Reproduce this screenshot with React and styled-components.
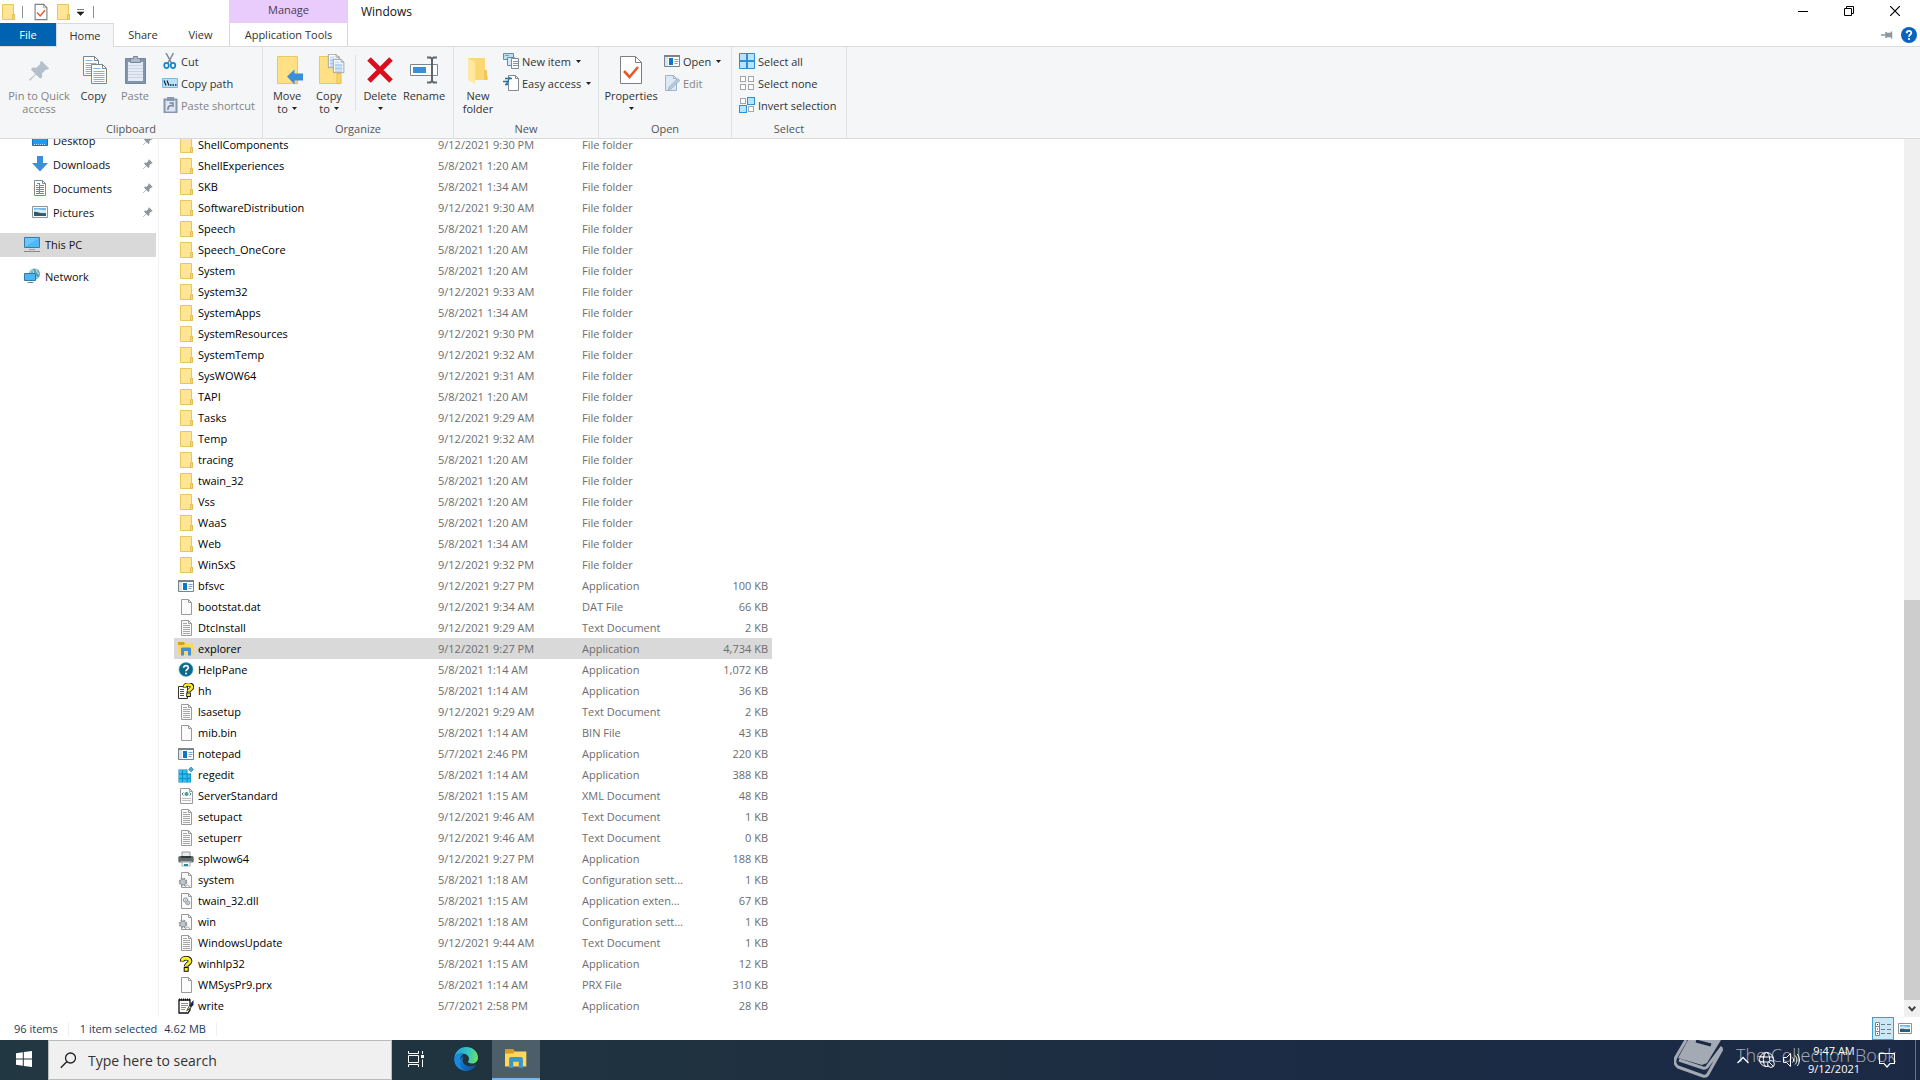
import React, { useState } from 'react';
import styled, { createGlobalStyle } from 'styled-components';

const GlobalStyle = createGlobalStyle`
  * {
    box-sizing: border-box;
  }
  body {
    margin: 0;
    background: #fff;
    color: #111;
    font-family: 'Open Sans', 'Noto Sans', sans-serif;
    font-size: 11px;
  }
  button,
  input {
    font: inherit;
    color: inherit;
  }
  svg {
    display: block;
    flex: none;
  }
`;

const PlainButton = styled.button`
  display: flex;
  align-items: center;
  padding: 0;
  border: 0;
  background: transparent;
  white-space: nowrap;
`;

const Desktop = styled.div`
  display: flex;
  flex-direction: column;
  height: 100vh;
  overflow: hidden;
`;

/* ---------- title bar and tabs ---------- */

const TitleBar = styled.header`
  display: flex;
  height: 23px;
`;

const QuickAccess = styled.div`
  display: flex;
  align-items: center;
  width: 229px;
`;

const QuickButton = styled(PlainButton)`
  justify-content: center;
  width: ${(p) => p.$width || 22}px;
  height: 22px;
`;

const Divider = styled.span`
  width: 1px;
  height: 12px;
  margin: 0 6px;
  background: #8f8f8f;
`;

const ContextTitle = styled.div`
  width: 119px;
  background: #e9ccfc;
  color: #4b3a57;
  line-height: 20px;
  text-align: center;
`;

const WindowTitle = styled.h1`
  flex: 1;
  margin: 0;
  padding-left: 13px;
  font-size: 12px;
  font-weight: 400;
  line-height: 24px;
`;

const WindowButton = styled(PlainButton)`
  justify-content: center;
  width: 46px;
  height: 21px;
`;

const WindowButtons = styled.div`
  display: flex;
  padding-right: 2px;
`;

const TabRow = styled.nav`
  display: flex;
  height: 24px;
  border-bottom: 1px solid #dadbdc;
`;

const Tab = styled(PlainButton)`
  justify-content: center;
  width: ${(p) => p.$width}px;
  height: 23px;
  color: #333;
`;

const FileTab = styled(Tab)`
  background: #0063b1;
  color: #fff;
`;

const ActiveTab = styled(Tab)`
  height: 24px;
  border: 1px solid #dadbdc;
  border-bottom: 0;
  background: #f4f6f8;
`;

const ContextTab = styled(Tab)`
  border: solid #dcd3e3;
  border-width: 0 1px;
`;

const TabTools = styled.div`
  display: flex;
  flex: 1;
  align-items: center;
  justify-content: flex-end;
  gap: 8px;
  padding-right: 3px;
`;

/* ---------- ribbon ---------- */

const Ribbon = styled.section`
  display: flex;
  height: 92px;
  border-bottom: 1px solid #d8dadc;
  background: #f4f6f8;
`;

const Group = styled.div`
  display: flex;
  flex-direction: column;
  width: ${(p) => p.$width}px;
  border-right: 1px solid #e0e2e4;
`;

const GroupBody = styled.div`
  display: flex;
  flex: 1;
  padding-left: 3px;
`;

const GroupLabel = styled.div`
  height: 17px;
  color: #555;
  line-height: 15px;
  text-align: center;
`;

const BigButton = styled(PlainButton)`
  flex-direction: column;
  gap: 3px;
  width: ${(p) => p.$width || 42}px;
  padding-top: 7px;
  color: ${(p) => (p.disabled ? '#838383' : '#333')};
  line-height: 13px;
`;

const BigLabel = styled.span`
  display: flex;
  align-items: center;
  justify-content: center;
  gap: 4px;
  height: 13px;
`;

const BigText = styled.span`
  display: flex;
  flex-direction: column;
`;

const SmallColumn = styled.div`
  display: flex;
  flex-direction: column;
  padding-top: 3px;
`;

const SmallButton = styled(PlainButton)`
  gap: 3px;
  height: 22px;
  padding: 0 3px 0 4px;
  color: ${(p) => (p.disabled ? '#838383' : '#333')};
`;

const CaretGap = styled.span`
  padding-left: 2px;
`;

const GroupSplit = styled.span`
  width: 1px;
  height: 56px;
  margin: 8px 3px 0 5px;
  background: #e0e2e4;
`;

/* ---------- main area ---------- */

const Main = styled.main`
  display: flex;
  flex: 1;
  min-height: 0;
`;

const SidePane = styled.nav`
  width: 159px;
  padding-right: 2px;
  border-right: 1px solid #f2f2f2;
  overflow: hidden;
`;

const SideList = styled.div`
  display: flex;
  flex-direction: column;
  gap: 8px;
  margin-top: -10px;
`;

const SideItem = styled.a`
  display: flex;
  align-items: center;
  gap: 5px;
  height: 24px;
  padding: 0 3px 2px ${(p) => (p.$nested ? 32 : 24)}px;
  background: ${(p) => (p.$selected ? '#d9d9d9' : 'transparent')};
  color: #111;
  text-decoration: none;
`;

const SideLabel = styled.span`
  flex: 1;
`;

const FilePane = styled.section`
  display: flex;
  flex: 1;
  flex-direction: column;
  justify-content: flex-end;
  min-width: 0;
  padding: 0 0 1px 15px;
  overflow: hidden;
`;

const FileTable = styled.table`
  width: 598px;
  border-collapse: collapse;
  table-layout: fixed;
`;

const FileRow = styled.tr`
  height: 21px;
  background: ${(p) => (p.$selected ? '#d9d9d9' : 'transparent')};
`;

const Cell = styled.td`
  padding: 0;
  color: #6d6d6d;
  line-height: 21px;
  white-space: nowrap;
`;

const SizeCell = styled(Cell)`
  padding-right: 4px;
  text-align: right;
`;

const NameCell = styled(Cell)`
  padding-left: 4px;
  color: #000;
`;

const NameBox = styled.div`
  display: flex;
  align-items: center;
  gap: 4px;
  height: 21px;
`;

const ScrollBar = styled.div`
  display: flex;
  flex-direction: column;
  width: 16px;
  background: #f0f0f0;
`;

const ScrollSpace = styled.div`
  flex: 461;
`;

const ScrollThumb = styled.div`
  flex: 400;
  background: #cdcdcd;
`;

const ScrollButton = styled(PlainButton)`
  justify-content: center;
  height: 17px;
`;

/* ---------- status bar ---------- */

const StatusBar = styled.footer`
  display: flex;
  align-items: center;
  height: 23px;
  padding: 0 4px 0 14px;
  color: #1e395b;
`;

const StatusText = styled.span`
  margin-right: ${(p) => p.$gap || 10}px;
`;

const StatusSplit = styled.span`
  width: 1px;
  height: 14px;
  margin-right: 11px;
  background: #efefef;
`;

const ViewButtons = styled.div`
  display: flex;
  margin-left: auto;
`;

const ViewButton = styled(PlainButton)`
  justify-content: center;
  width: 22px;
  height: 23px;
  border: 1px solid ${(p) => (p.$active ? '#3a9fd6' : 'transparent')};
  background: ${(p) => (p.$active ? '#cbe8f6' : 'transparent')};
`;

/* ---------- taskbar ---------- */

const Taskbar = styled.footer`
  position: relative;
  display: flex;
  height: 40px;
  background: linear-gradient(90deg, #213741, #1f323f 35%, #1c2c44 65%, #1b2945);
  color: #fff;
  overflow: hidden;
`;

const TaskGroup = styled.div`
  display: flex;
  gap: 2px;
`;

const TaskButton = styled(PlainButton)`
  justify-content: center;
  width: 48px;
  height: 40px;
  border-bottom: 2px solid ${(p) => (p.$active ? '#76b9ed' : 'transparent')};
  background: ${(p) => (p.$active ? '#4c5e67' : 'transparent')};
`;

const SearchBox = styled.label`
  display: flex;
  align-items: center;
  gap: 11px;
  width: 344px;
  padding-left: 11px;
  border: 1px solid #b9bcbd;
  background: #f0f0f0;
`;

const SearchInput = styled.input`
  flex: 1;
  min-width: 0;
  padding: 0;
  border: 0;
  outline: 0;
  background: transparent;
  color: #222;
  font-size: 14px;

  &::placeholder {
    color: #333;
    opacity: 1;
  }
`;

const Tray = styled.div`
  display: flex;
  align-items: center;
  margin-left: auto;
  padding-right: 4px;
`;

const TrayButton = styled(PlainButton)`
  justify-content: center;
  width: 24px;
  height: 40px;
`;

const Clock = styled(PlainButton)`
  flex-direction: column;
  justify-content: center;
  width: 62px;
  height: 40px;
  line-height: 18px;
`;

const ActionButton = styled(TrayButton)`
  width: 44px;
`;

const PeekEdge = styled.span`
  width: 1px;
  height: 40px;
  margin-left: 6px;
  background: #66718a;
`;

const Watermark = styled.div`
  position: absolute;
  right: 24px;
  bottom: 0;
  display: flex;
  align-items: center;
  gap: 12px;
  height: 40px;
  color: #fff;
  font-size: 18px;
  font-weight: 300;
  line-height: 30px;
  opacity: 0.6;
  pointer-events: none;
`;

const WatermarkText = styled.span`
  height: 40px;
`;

/* ---------- drawings ---------- */

const Svg = ({ w = 16, h = w, box, children }) => (
  <svg width={w} height={h} viewBox={box || `0 0 ${w} ${h}`} fill="none" aria-hidden="true">
    {children}
  </svg>
);

const Caret = () => (
  <Svg w={5} h={3}>
    <path d="M0 0h5L2.5 3z" fill="#222" />
  </Svg>
);

const FolderIcon = () => (
  <Svg>
    <path d="M2.5.5h11v9l1 1v5h-12z" fill="#ffe594" stroke="#e8c65c" />
    <path d="M12.500 10.500h2v5h-2z" fill="#f7d777" stroke="#e3be55" />
  </Svg>
);

const page = 'M3.5.5h7l3 3v12h-10z';

const PageIcon = ({ children }) => (
  <Svg>
    <path d={page} fill="#fbfbfb" stroke="#9a9a9a" />
    <path d="M10.5.5v3h3" stroke="#9a9a9a" />
    {children}
  </Svg>
);

const TextIcon = () => (
  <PageIcon>
    <path d="M5 3.500h4M5 5.500h7M5 7.500h7M5 9.500h7M5 11.500h7M5 13.500h7" stroke="#a6a6a6" />
  </PageIcon>
);

const AppIcon = () => (
  <Svg>
    <path d="M.5 2.500h15v11H.5z" fill="#fff" stroke="#7b848b" />
    <path d="M0 2h16v2H0z" fill="#7b848b" />
    <path d="M1 4h3v9H1z" fill="#d7e6f2" />
    <path d="M5 5h4v7H5z" fill="#0f75c5" />
    <path d="M10.500 6.500h4M10.500 8.500h4M10.500 10.500h3" stroke="#7aa3c4" />
  </Svg>
);

const ExplorerIcon = ({ size = 16 }) => (
  <Svg w={size} box="0 0 16 16">
    <path d="M0 1h6l1 1.500h8.500V13.500H0z" fill="#ffd75e" />
    <path d="M0 1h6l1 1.800L6 4H0z" fill="#d99f1c" />
    <path d="M3 7.500l1-1h8l1 1v7h-3V10H6v4.500H3z" fill="#3d93d0" />
  </Svg>
);

const HelpPaneIcon = () => (
  <Svg>
    <circle cx="8" cy="7.500" r="7" fill="#0b6a8c" stroke="#5ba3bb" strokeWidth=".6" />
    <path d="M5.700 5.800C5.700 2.800 10.400 3 10.300 5.700 10.200 7.400 8 7.500 8 9.300" stroke="#fff" strokeWidth="1.700" />
    <circle cx="8" cy="11.500" r="1" fill="#fff" />
  </Svg>
);

const QuestionMark = () => (
  <>
    <path d="M4 5.500C4 1 12.500 1 12 5.300 11.700 7.700 8.500 7.500 8.200 10.500" stroke="#111" strokeWidth="4.600" />
    <path d="M5.700 11h5v4.800h-5z" fill="#111" />
    <path d="M4 4.800C4.300 1.300 12.200 1.300 12 5.300 11.700 7.700 8.500 7.500 8.200 10" stroke="#fff01f" strokeWidth="2.800" />
    <path d="M6.700 12h3v2.800h-3z" fill="#fff01f" />
  </>
);

const MarkIcon = () => (
  <Svg>
    <QuestionMark />
  </Svg>
);

const HelpFileIcon = () => (
  <Svg>
    <path d="M.5 3.500h9v12h-9z" fill="#fff" stroke="#333" />
    <path d="M2 6.500h4M2 8.500h4M2 10.500h4M2 12.500h4" stroke="#555" />
    <g transform="translate(3 -.6) scale(.92)">
      <QuestionMark />
    </g>
  </Svg>
);

const RegeditIcon = () => (
  <Svg>
    <path d="M.5 2.500h9v4h3.500v9H.5z" fill="#0d7fb5" />
    <path d="M1 3h3.200v3.600H1zM5 3h3.700v3.600H5zM1 7.400h3.200V11H1zM5 7.400h3.700V11H5zM9.500 7.400h3V11h-3zM1 11.800h3.200V15H1zM5 11.800h3.700V15H5zM9.500 11.800h3V15h-3z" fill="#29c1f2" />
    <path d="M13 0l2.500 2.500L13 5l-2.500-2.500z" fill="#4ea9cd" stroke="#2b7b9d" strokeWidth=".6" />
  </Svg>
);

const XmlIcon = () => (
  <Svg>
    <path d="M2.500.5h9l3 3v12h-12z" fill="#fbfbfb" stroke="#9a9a9a" />
    <path d="M11.500.5v3h3" stroke="#9a9a9a" />
    <path d="M5.500 4.500l-1.500 1.500 1.500 1.500M11.500 4.500L13 6l-1.500 1.500" stroke="#5a7690" />
    <circle cx="8.500" cy="6" r="2" fill="#41a38c" />
    <path d="M4 10.500h9M4 12.500h9" stroke="#c0c0c0" />
  </Svg>
);

const PrinterIcon = () => (
  <Svg>
    <path d="M4 1h8v5H4z" fill="#e8ecee" stroke="#858b90" strokeWidth=".8" />
    <rect x=".3" y="5" width="15.400" height="6.500" rx="1.500" fill="#646a6e" />
    <path d="M3 5h10v2H3z" fill="#33383b" />
    <path d="M2.500 10h11v2h-11z" fill="#a8aeb2" />
    <path d="M4 11h8v4H4z" fill="#f5f8f9" stroke="#9aa0a4" strokeWidth=".8" />
    <path d="M6 13h4v2H6z" fill="#2b8a9c" />
  </Svg>
);

const ConfigIcon = () => (
  <PageIcon>
    <circle cx="5" cy="10" r="3.300" fill="#d5d9dc" stroke="#8b9197" strokeWidth="2" strokeDasharray="1.600 1" />
    <circle cx="5" cy="10" r="2.800" fill="#d5d9dc" stroke="#8b9197" strokeWidth=".8" />
    <circle cx="5" cy="10" r="1.200" fill="#fff" stroke="#8b9197" strokeWidth=".7" />
    <path d="M9.500 13a2 2 0 1 0 .1 0" stroke="#9ba1a6" />
  </PageIcon>
);

const DllIcon = () => (
  <PageIcon>
    <circle cx="7.500" cy="7" r="2.200" fill="#dde4e9" stroke="#8e99a3" />
    <circle cx="9.800" cy="9.800" r="2" fill="#dde4e9" stroke="#8e99a3" />
    <path d="M7 7h1M9 10h1.500" stroke="#8e99a3" />
  </PageIcon>
);

const WriteIcon = () => (
  <Svg>
    <path d="M1 2h11v10l-2 3H1z" fill="#fff" stroke="#111" strokeWidth="1.300" />
    <path d="M1 1.500h12" stroke="#111" strokeWidth="2" strokeDasharray="1 1" />
    <path d="M3 5.500h7M3 7.500h7M3 9.500h5M3 11.500h4" stroke="#8d8d8d" />
    <path d="M15.500 2v5L10 12.500l-1-1 4-6.500z" fill="#172070" />
    <path d="M11.500 7.500l1.800 1.800L8.500 13z" fill="#e7d534" stroke="#111" strokeWidth=".5" />
  </Svg>
);

const PinShape = ({ fill }) => (
  <path d="M9.500.5l6 6-1.500 1-1-.2-3 3 .2 3-1.500 1.200-3.400-3.400L.8 16 0 15.200l4.900-4.500L1.500 7.300l1.200-1.500 3 .2 3-3-.2-1z" fill={fill} />
);

const SidePin = () => (
  <Svg w={10} box="0 0 16 16">
    <PinShape fill="#8e969d" />
  </Svg>
);

const MonitorIcon = () => (
  <Svg>
    <path d="M.5 1.500h15v10H.5z" fill="#4db8f6" stroke="#3b7ba5" />
    <path d="M1 2h14L1 11z" fill="#7fd0fb" opacity=".6" />
    <path d="M5 13.500h6" stroke="#7ea5bd" />
    <path d="M0 15.500h16" stroke="#888" />
  </Svg>
);

const NetworkIcon = () => (
  <Svg>
    <circle cx="10.500" cy="6" r="5.500" fill="#5d9fc4" />
    <path d="M7 2c3 0 3 3 1.500 5L6 8zM12 1c1.500 2-.5 4 3.500 5M10 8l4 2" stroke="#b4dbc5" strokeWidth="1.300" />
    <path d="M.5 5.500h11v7H.5z" fill="#48b7f5" stroke="#2f7bab" />
    <path d="M3.500 14.500h6" stroke="#5f91b0" />
  </Svg>
);

const DesktopIcon = () => (
  <Svg>
    <path d="M.5 2.500h15v11H.5z" fill="#1e9bf0" stroke="#0d74c4" />
    <path d="M2 12.500h12" stroke="#b6defa" strokeDasharray="1 1" />
  </Svg>
);

const DownloadIcon = () => (
  <Svg>
    <path d="M5 0h6v7h5l-8 8.500L0 7h5z" fill="#3b8ee0" />
  </Svg>
);

const DocumentIcon = () => (
  <Svg>
    <path d="M2.500.5h8l3 3v12h-11z" fill="#fff" stroke="#7f8b94" />
    <path d="M10.500.5v3h3" stroke="#7f8b94" />
    <path d="M4 5.500h2M4 7.500h8M4 9.500h8M4 11.500h8M4 13.500h8M8 5.500h4M5 3.500h3" stroke="#4d92cc" />
    <path d="M7.500 4v9" stroke="#4d92cc" />
  </Svg>
);

const PictureIcon = () => (
  <Svg>
    <path d="M.5 2.500h15v11H.5z" fill="#fff" stroke="#8b9399" />
    <path d="M2 4h12v8H2z" fill="#73b9ea" />
    <path d="M2 6c5-2 7 1 12 0v3H2z" fill="#d7ecf6" />
    <path d="M2 8c3-1 6 2 12 1v3H2z" fill="#315a6b" />
  </Svg>
);

const BigPinIcon = () => (
  <Svg w={32}>
    <g transform="translate(6 6) scale(1.300)">
      <PinShape fill="#b3bfcb" />
    </g>
  </Svg>
);

const sheet = (
  <>
    <path d="M.5.5h11l4 4v15H.5z" fill="#fff" stroke="#7d868e" />
    <path d="M11.500.5v4h4" stroke="#7d868e" />
    <path d="M2.500 4.500h7M2.500 7.500h11M2.500 9.500h11M2.500 11.500h11M2.500 13.500h11M2.500 15.500h11M2.500 17.500h11" stroke="#7fb0e4" />
  </>
);

const CopyIcon = () => (
  <Svg w={32}>
    <g transform="translate(5 2)">{sheet}</g>
    <g transform="translate(13 10)">{sheet}</g>
  </Svg>
);

const PasteIcon = () => (
  <Svg w={32}>
    <path d="M6.500 4.500h20v25h-20z" fill="#8295af" stroke="#74859f" />
    <path d="M9 8h15v19H9z" fill="#e4ebf4" />
    <path d="M9 11.500h15M9 14.500h15M9 17.500h15M9 20.500h15M9 23.500h15" stroke="#c9d5e4" />
    <path d="M11.500 4.500h3v-2h4v2h3v4h-10z" fill="#adb9c9" stroke="#74859f" />
  </Svg>
);

const CutIcon = () => (
  <Svg>
    <path d="M4 0l5.500 10M11.500 0L6 10" stroke="#7c8894" strokeWidth="1.500" />
    <ellipse cx="4.500" cy="12.500" rx="2.300" ry="2.600" stroke="#1587c9" strokeWidth="1.700" />
    <ellipse cx="11" cy="12.500" rx="2.300" ry="2.600" stroke="#1587c9" strokeWidth="1.700" />
  </Svg>
);

const CopyPathIcon = () => (
  <Svg>
    <path d="M.5 3.500h15v9H.5z" fill="#b9e2fa" stroke="#7fb8dc" />
    <path d="M2 5.500l2 5M5 5.500l2 5" stroke="#123" strokeWidth="1.200" />
    <path d="M8 10h1.500M10.500 10H12M13 10h1.500" stroke="#123" strokeWidth="1.500" />
  </Svg>
);

const ShortcutIcon = () => (
  <Svg>
    <path d="M2.500 2.500h12v13h-12z" fill="#dfe6ef" stroke="#8797b0" strokeWidth="2" />
    <path d="M5 0h7v4H5z" fill="#8797b0" />
    <path d="M6 13c-.5-3 1-4.500 4-4.500M7.500 6H11v4" stroke="#7386a5" strokeWidth="1.500" />
  </Svg>
);

const MoveIcon = () => (
  <Svg w={32}>
    <path d="M6.500 2.500h20v27h-20z" fill="#ffe085" stroke="#ecc65f" />
    <path d="M23 20.500h3.500v9H23z" fill="#f9d66f" stroke="#e4bd52" />
    <path d="M16 22.500l7.500-7v4H32v7h-8.500v4z" fill="#3a8fdb" />
  </Svg>
);

const CopyToIcon = () => (
  <Svg w={32}>
    <path d="M6.500 2.500h20v27h-20z" fill="#ffe085" stroke="#ecc65f" />
    <path d="M24 19.500h4v10h-4z" fill="#f9d66f" stroke="#e4bd52" />
    <g transform="translate(15 0) scale(.7)">{sheet}</g>
    <g transform="translate(20 5) scale(.7)">{sheet}</g>
  </Svg>
);

const DeleteIcon = () => (
  <Svg w={32}>
    <path d="M5 5l22 22M27 5L5 27" stroke="#dc0d1c" strokeWidth="5" />
  </Svg>
);

const RenameIcon = () => (
  <Svg w={32}>
    <path d="M2.500 10.500h27v11h-27z" fill="#fff" stroke="#7d868e" />
    <path d="M5 13h13v6H5z" fill="#3a8fdb" />
    <path d="M19 3.500h3.500L24 5l1.500-1.500H29M19 28.500h3.500L24 27l1.500 1.500H29M24 5v22" stroke="#5e666c" strokeWidth="2" />
  </Svg>
);

const NewFolderIcon = () => (
  <Svg w={32}>
    <path d="M6 4h17v18h3v4H11z" fill="#fbd871" />
    <path d="M6 4l7 4v22l-7-4z" fill="#ffe99f" />
    <path d="M22 16h3v10h-3z" fill="#efc75c" />
  </Svg>
);

const NewItemIcon = () => (
  <Svg>
    <path d="M.5.5h10v6H.5z" fill="#b9dff5" stroke="#6c8ba1" />
    <path d="M4.500 4.500h7v8h-7z" fill="#d8e9f5" stroke="#6c8ba1" />
    <path d="M8.500 5.500h7v10h-7z" fill="#fff" stroke="#818a91" />
    <path d="M10 8.500h5M10 10.500h5M10 12.500h5M2 2.500h4" stroke="#8a98a3" />
  </Svg>
);

const EasyAccessIcon = () => (
  <Svg>
    <path d="M5.500.5h7l3 3v12h-10z" fill="#fff" stroke="#818a91" />
    <path d="M12.500.5v3h3" stroke="#818a91" />
    <path d="M2 3.500h7M0 6.500h6M2 9.500h3M7 2L3 10" stroke="#2f6f9f" strokeWidth="1.300" />
  </Svg>
);

const PropertiesIcon = ({ size = 32 }) => (
  <Svg w={size} box="0 0 32 32">
    <path d="M5.500 2.500h15l6 6v21h-21z" fill="#fff" stroke="#7f7f7f" strokeWidth={size < 32 ? 2 : 1} />
    <path d="M20.500 2.500v6h6" stroke="#7f7f7f" />
    <path d="M9 17l5.500 6L23 13" stroke="#e8592b" strokeWidth="2.600" />
  </Svg>
);

const EditIcon = () => (
  <Svg>
    <path d="M1.500.5h8l3 3v12h-11z" fill="#dde8f5" stroke="#9fb3cb" />
    <path d="M9.500.5v3h3" stroke="#9fb3cb" />
    <path d="M14 3.500l2 2L7 14l-3 1 1-3z" fill="#b7c9de" stroke="#92a8c3" strokeWidth=".6" />
  </Svg>
);

const Box = ({ x, y, on }) => (
  <rect x={x} y={y} width={on ? 7 : 5} height={on ? 7 : 5} fill={on ? '#b9e2fb' : '#fff'} stroke={on ? '#2d8ed8' : '#a5a5a5'} />
);

const SelectAllIcon = () => (
  <Svg>
    <path d="M.5.5h15v15H.5z" fill="#b9e2fb" stroke="#2d8ed8" />
    <path d="M8 0v16M0 8h16" stroke="#2d8ed8" strokeWidth="2" />
  </Svg>
);

const SelectNoneIcon = () => (
  <Svg>
    <Box x={1.5} y={1.5} />
    <Box x={9.5} y={1.5} />
    <Box x={1.5} y={9.5} />
    <Box x={9.5} y={9.5} />
  </Svg>
);

const InvertIcon = () => (
  <Svg>
    <Box x={1.5} y={1.5} />
    <Box x={8.5} y={0.5} on />
    <Box x={0.5} y={8.5} on />
    <Box x={9.5} y={9.5} />
  </Svg>
);

const DetailsIcon = () => (
  <Svg>
    <path d="M.5 1.500h4v13h-4zM.5 5.500h4M.5 10.500h4" fill="#fff" stroke="#7d868e" />
    <path d="M2 3.500h1M2 8h1M2 12.500h1" stroke="#333" />
    <path d="M6 3.500h4M12 3.500h4M6 8.500h4M12 8.500h4M6 12.500h4M12 12.500h4" stroke="#6c7a84" />
  </Svg>
);

const ThumbnailIcon = () => (
  <Svg w={14} h={12}>
    <path d="M.5.5h13v10H.5z" fill="#fff" stroke="#8b9399" />
    <path d="M2 2h10v7H2z" fill="#73b9ea" />
    <path d="M2 4c4-2 6 1 10 0v2H2z" fill="#d7ecf6" />
    <path d="M2 6c3-1 5 1 10 0v3H2z" fill="#315a6b" />
  </Svg>
);

const StartIcon = () => (
  <Svg>
    <path d="M0 2.300l6.800-1v6.300H0zM7.800 1.100L16 0v7.600H7.800zM0 8.500h6.800v6.300l-6.800-1zM7.800 8.500H16V16l-8.200-1.100z" fill="#fff" />
  </Svg>
);

const SearchIcon = () => (
  <Svg w={17}>
    <circle cx="10.500" cy="6" r="5" stroke="#222" strokeWidth="1.300" />
    <path d="M7 9.500L.8 15.700" stroke="#222" strokeWidth="1.400" />
  </Svg>
);

const TaskViewIcon = () => (
  <Svg>
    <path d="M.5 0v2.500h10V0M.5 4.500h10v7H.5zM.5 16v-2.500h10V16M14.500 0v3M14.500 8.500V16" stroke="#fff" />
    <path d="M13 4h3v3h-3z" fill="#fff" />
  </Svg>
);

const EdgeIcon = () => (
  <Svg w={24}>
    <defs>
      <linearGradient id="edgeTop" x1="0" y1=".4" x2="1" y2=".5">
        <stop offset="0" stopColor="#249fe2" />
        <stop offset=".6" stopColor="#36c6c0" />
        <stop offset="1" stopColor="#6be35b" />
      </linearGradient>
      <linearGradient id="edgeLow" x1="0" y1="0" x2="1" y2="1">
        <stop offset="0" stopColor="#1686dc" />
        <stop offset="1" stopColor="#0a4fa1" />
      </linearGradient>
    </defs>
    <path d="M.3 11C1 4.500 6 0 12 0c7 0 12 5 12 10.500 0 4-3 6-6 6-2.800 0-4.300-1.200-4-2 1.500-1.500 1.300-4-.2-5.700C10.500 5.500 3.500 5.500.3 11z" fill="url(#edgeTop)" />
    <path d="M.2 11C2 7.500 6 6.300 9.500 7c-3 1.500-3.700 5-3 8 1 5 5.500 8.500 10 7.600C9 26-.5 21 .2 11z" fill="#1789df" />
    <path d="M9.500 9.500c-2.500 4 0 9 5 9.800 3 .5 5.500-.4 7.500-1.500-2 4-6 6.200-10 6.200-5-1.500-8.500-8-5-12.500 1-1.200 2-1.700 2.500-2z" fill="url(#edgeLow)" />
  </Svg>
);

const ChevronUp = () => (
  <Svg w={12} h={8}>
    <path d="M.5 7L6 1.500 11.500 7" stroke="#fff" strokeWidth="1.300" />
  </Svg>
);

const GlobeIcon = () => (
  <Svg>
    <circle cx="7.500" cy="7.500" r="7" stroke="#fff" />
    <ellipse cx="7.500" cy="7.500" rx="3.200" ry="7" stroke="#fff" />
    <path d="M1 5h13M1 10h8" stroke="#fff" />
    <circle cx="12" cy="12" r="3.400" fill="#1b2945" stroke="#fff" />
    <path d="M9.800 9.800l4.400 4.400" stroke="#fff" />
  </Svg>
);

const SpeakerIcon = () => (
  <Svg w={17} h={16}>
    <path d="M.5 5.500h3l4-4v13l-4-4h-3zM9.500 5.500c1.500 1.500 1.500 3.500 0 5M12 3.500c2.500 2.500 2.500 6.500 0 9M14.200 2c3 3.500 3 8.500 0 12" stroke="#fff" />
  </Svg>
);

const ActionIcon = () => (
  <Svg w={16}>
    <path d="M.5 1.500h15v10H11l-3 3.500-3-3.500H.5z" stroke="#fff" strokeWidth="1.200" />
  </Svg>
);

const BookIcon = () => (
  <Svg w={50} h={40}>
    <path d="M14 0h33L33 23l-5 2L4 18z" fill="#fff" />
    <path d="M22 1l15 4" stroke="#1b2945" strokeWidth="3" />
    <path d="M12 0L2 17c-2 4-1 8 2 10l25 9c2 .5 4 0 5-2l14-25M5 20l24 8c2 .5 3 0 4-1L48 7" stroke="#fff" strokeWidth="3" strokeLinejoin="round" />
  </Svg>
);

/* ---------- data ---------- */

const folders = [
  ['ShellComponents', '9/12/2021 9:30 PM'],
  ['ShellExperiences', '5/8/2021 1:20 AM'],
  ['SKB', '5/8/2021 1:34 AM'],
  ['SoftwareDistribution', '9/12/2021 9:30 AM'],
  ['Speech', '5/8/2021 1:20 AM'],
  ['Speech_OneCore', '5/8/2021 1:20 AM'],
  ['System', '5/8/2021 1:20 AM'],
  ['System32', '9/12/2021 9:33 AM'],
  ['SystemApps', '5/8/2021 1:34 AM'],
  ['SystemResources', '9/12/2021 9:30 PM'],
  ['SystemTemp', '9/12/2021 9:32 AM'],
  ['SysWOW64', '9/12/2021 9:31 AM'],
  ['TAPI', '5/8/2021 1:20 AM'],
  ['Tasks', '9/12/2021 9:29 AM'],
  ['Temp', '9/12/2021 9:32 AM'],
  ['tracing', '5/8/2021 1:20 AM'],
  ['twain_32', '5/8/2021 1:20 AM'],
  ['Vss', '5/8/2021 1:20 AM'],
  ['WaaS', '5/8/2021 1:20 AM'],
  ['Web', '5/8/2021 1:34 AM'],
  ['WinSxS', '9/12/2021 9:32 PM'],
].map(([name, date]) => [name, date, 'File folder', '', FolderIcon]);

const files = [
  ['bfsvc', '9/12/2021 9:27 PM', 'Application', '100 KB', AppIcon],
  ['bootstat.dat', '9/12/2021 9:34 AM', 'DAT File', '66 KB', PageIcon],
  ['DtcInstall', '9/12/2021 9:29 AM', 'Text Document', '2 KB', TextIcon],
  ['explorer', '9/12/2021 9:27 PM', 'Application', '4,734 KB', ExplorerIcon],
  ['HelpPane', '5/8/2021 1:14 AM', 'Application', '1,072 KB', HelpPaneIcon],
  ['hh', '5/8/2021 1:14 AM', 'Application', '36 KB', HelpFileIcon],
  ['lsasetup', '9/12/2021 9:29 AM', 'Text Document', '2 KB', TextIcon],
  ['mib.bin', '5/8/2021 1:14 AM', 'BIN File', '43 KB', PageIcon],
  ['notepad', '5/7/2021 2:46 PM', 'Application', '220 KB', AppIcon],
  ['regedit', '5/8/2021 1:14 AM', 'Application', '388 KB', RegeditIcon],
  ['ServerStandard', '5/8/2021 1:15 AM', 'XML Document', '48 KB', XmlIcon],
  ['setupact', '9/12/2021 9:46 AM', 'Text Document', '1 KB', TextIcon],
  ['setuperr', '9/12/2021 9:46 AM', 'Text Document', '0 KB', TextIcon],
  ['splwow64', '9/12/2021 9:27 PM', 'Application', '188 KB', PrinterIcon],
  ['system', '5/8/2021 1:18 AM', 'Configuration sett...', '1 KB', ConfigIcon],
  ['twain_32.dll', '5/8/2021 1:15 AM', 'Application exten...', '67 KB', DllIcon],
  ['win', '5/8/2021 1:18 AM', 'Configuration sett...', '1 KB', ConfigIcon],
  ['WindowsUpdate', '9/12/2021 9:44 AM', 'Text Document', '1 KB', TextIcon],
  ['winhlp32', '5/8/2021 1:15 AM', 'Application', '12 KB', MarkIcon],
  ['WMSysPr9.prx', '5/8/2021 1:14 AM', 'PRX File', '310 KB', PageIcon],
  ['write', '5/7/2021 2:58 PM', 'Application', '28 KB', WriteIcon],
];

const quickLinks = [
  ['Desktop', DesktopIcon],
  ['Downloads', DownloadIcon],
  ['Documents', DocumentIcon],
  ['Pictures', PictureIcon],
];

/* ---------- composed parts ---------- */

const Big = ({ icon: Icon, lines, caret, ...rest }) => (
  <BigButton {...rest}>
    <Icon />
    <BigText>
      {lines.map((line, i) => (
        <BigLabel key={line}>
          {line}
          {caret && i > 0 && i === lines.length - 1 && <Caret />}
        </BigLabel>
      ))}
      {caret && lines.length === 1 && (
        <BigLabel>
          <Caret />
        </BigLabel>
      )}
    </BigText>
  </BigButton>
);

const Small = ({ icon: Icon, label, caret, ...rest }) => (
  <SmallButton {...rest}>
    <Icon />
    {label}
    {caret && (
      <CaretGap>
        <Caret />
      </CaretGap>
    )}
  </SmallButton>
);

const RibbonGroup = ({ label, width, children }) => (
  <Group $width={width}>
    <GroupBody>{children}</GroupBody>
    <GroupLabel>{label}</GroupLabel>
  </Group>
);

const Header = () => (
  <>
    <TitleBar>
      <QuickAccess>
        <QuickButton $width={16} aria-label="Folder menu">
          <FolderIcon />
        </QuickButton>
        <Divider />
        <QuickButton $width={24} aria-label="Properties">
          <PropertiesIcon size={18} />
        </QuickButton>
        <QuickButton $width={20} aria-label="New folder">
          <FolderIcon />
        </QuickButton>
        <QuickButton $width={14} aria-label="Customize toolbar">
          <Svg w={7} h={8}>
            <path d="M0 1.500h7M0 4h7L3.500 7.500z" stroke="#222" strokeWidth=".6" fill="#222" />
          </Svg>
        </QuickButton>
        <Divider />
      </QuickAccess>
      <ContextTitle>Manage</ContextTitle>
      <WindowTitle>Windows</WindowTitle>
      <WindowButtons>
        <WindowButton aria-label="Minimize">
          <Svg w={10}>
            <path d="M0 5.500h10" stroke="#000" />
          </Svg>
        </WindowButton>
        <WindowButton aria-label="Restore">
          <Svg w={10}>
            <path d="M.5 2.500h7v7h-7zM2.500 2V.5h7v7H8" stroke="#000" />
          </Svg>
        </WindowButton>
        <WindowButton aria-label="Close">
          <Svg w={10}>
            <path d="M0 0l10 10M10 0L0 10" stroke="#000" strokeWidth="1.200" />
          </Svg>
        </WindowButton>
      </WindowButtons>
    </TitleBar>
    <TabRow>
      <FileTab $width={56}>File</FileTab>
      <ActiveTab $width={58}>Home</ActiveTab>
      <Tab $width={58}>Share</Tab>
      <Tab $width={57}>View</Tab>
      <ContextTab $width={119}>Application Tools</ContextTab>
      <TabTools>
        <PlainButton aria-label="Pin the ribbon">
          <Svg w={12} h={8}>
            <path d="M0 4h5M5 1v6M5 2.500h5v3H5zM10.500.5v7" stroke="#8e969d" strokeWidth="1.500" fill="#8e969d" />
          </Svg>
        </PlainButton>
        <PlainButton aria-label="Help">
          <Svg w={16}>
            <circle cx="8" cy="8" r="8" fill="#0b63bd" />
            <path d="M5.700 6.200c0-3.200 4.700-3 4.600-.3C10.200 7.500 8 7.700 8 9.700" stroke="#fff" strokeWidth="1.800" />
            <circle cx="8" cy="12" r="1.100" fill="#fff" />
          </Svg>
        </PlainButton>
      </TabTools>
    </TabRow>
  </>
);

const RibbonBar = () => (
  <Ribbon>
    <RibbonGroup label="Clipboard" width={263}>
      <Big icon={BigPinIcon} lines={['Pin to Quick', 'access']} $width={72} disabled />
      <Big icon={CopyIcon} lines={['Copy']} $width={37} />
      <Big icon={PasteIcon} lines={['Paste']} $width={46} disabled />
      <SmallColumn>
        <Small icon={CutIcon} label="Cut" />
        <Small icon={CopyPathIcon} label="Copy path" />
        <Small icon={ShortcutIcon} label="Paste shortcut" disabled />
      </SmallColumn>
    </RibbonGroup>
    <RibbonGroup label="Organize" width={191}>
      <Big icon={MoveIcon} lines={['Move', 'to']} caret />
      <Big icon={CopyToIcon} lines={['Copy', 'to']} caret />
      <GroupSplit />
      <Big icon={DeleteIcon} lines={['Delete']} caret />
      <Big icon={RenameIcon} lines={['Rename']} $width={46} />
    </RibbonGroup>
    <RibbonGroup label="New" width={145}>
      <Big icon={NewFolderIcon} lines={['New', 'folder']} />
      <SmallColumn>
        <Small icon={NewItemIcon} label="New item" caret />
        <Small icon={EasyAccessIcon} label="Easy access" caret />
      </SmallColumn>
    </RibbonGroup>
    <RibbonGroup label="Open" width={133}>
      <Big icon={PropertiesIcon} lines={['Properties']} $width={58} caret />
      <SmallColumn>
        <Small icon={AppIcon} label="Open" caret />
        <Small icon={EditIcon} label="Edit" disabled />
      </SmallColumn>
    </RibbonGroup>
    <RibbonGroup label="Select" width={115}>
      <SmallColumn>
        <Small icon={SelectAllIcon} label="Select all" />
        <Small icon={SelectNoneIcon} label="Select none" />
        <Small icon={InvertIcon} label="Invert selection" />
      </SmallColumn>
    </RibbonGroup>
  </Ribbon>
);

const Sidebar = () => (
  <SidePane>
    <SideList>
      <div>
        {quickLinks.map(([name, Icon]) => (
          <SideItem key={name} href="#" $nested>
            <Icon />
            <SideLabel>{name}</SideLabel>
            <SidePin />
          </SideItem>
        ))}
      </div>
      <SideItem href="#" $selected>
        <MonitorIcon />
        This PC
      </SideItem>
      <SideItem href="#">
        <NetworkIcon />
        Network
      </SideItem>
    </SideList>
  </SidePane>
);

const FileList = ({ selected, onSelect }) => (
  <FilePane>
    <FileTable aria-label="Files">
      <colgroup>
        <col width="264" />
        <col width="144" />
        <col width="120" />
        <col />
      </colgroup>
      <tbody>
        {[...folders, ...files].map(([name, date, type, size, Icon]) => (
          <FileRow key={name} $selected={name === selected} onClick={() => onSelect(name)}>
            <NameCell>
              <NameBox>
                <Icon />
                {name}
              </NameBox>
            </NameCell>
            <Cell>{date}</Cell>
            <Cell>{type}</Cell>
            <SizeCell>{size}</SizeCell>
          </FileRow>
        ))}
      </tbody>
    </FileTable>
  </FilePane>
);

const TaskbarRow = () => (
  <Taskbar>
    <TaskButton aria-label="Start">
      <StartIcon />
    </TaskButton>
    <SearchBox>
      <SearchIcon />
      <SearchInput placeholder="Type here to search" aria-label="Search" />
    </SearchBox>
    <TaskGroup>
      <TaskButton aria-label="Task view">
        <TaskViewIcon />
      </TaskButton>
      <TaskButton aria-label="Edge">
        <EdgeIcon />
      </TaskButton>
      <TaskButton $active aria-label="File Explorer">
        <ExplorerIcon size={22} />
      </TaskButton>
    </TaskGroup>
    <Tray>
      <TrayButton aria-label="Hidden icons">
        <ChevronUp />
      </TrayButton>
      <TrayButton aria-label="Network">
        <GlobeIcon />
      </TrayButton>
      <TrayButton aria-label="Volume">
        <SpeakerIcon />
      </TrayButton>
      <Clock>
        <span>9:47 AM</span>
        <span>9/12/2021</span>
      </Clock>
      <ActionButton aria-label="Notifications">
        <ActionIcon />
      </ActionButton>
      <PeekEdge />
    </Tray>
    <Watermark>
      <BookIcon />
      <WatermarkText>The Collection Book</WatermarkText>
    </Watermark>
  </Taskbar>
);

const App = () => {
  const [selected, setSelected] = useState('explorer');

  return (
    <Desktop>
      <GlobalStyle />
      <Header />
      <RibbonBar />
      <Main>
        <Sidebar />
        <FileList selected={selected} onSelect={setSelected} />
        <ScrollBar>
          <ScrollSpace />
          <ScrollThumb />
          <ScrollButton aria-label="Scroll down">
            <Svg w={8} h={6}>
              <path d="M.7.8L4 4.200 7.300.8" stroke="#444" strokeWidth="2" />
            </Svg>
          </ScrollButton>
        </ScrollBar>
      </Main>
      <StatusBar>
        <StatusText>96 items</StatusText>
        <StatusSplit />
        <StatusText $gap={7}>1 item selected</StatusText>
        <StatusText>4.62 MB</StatusText>
        <StatusSplit />
        <ViewButtons>
          <ViewButton $active aria-label="Details view">
            <DetailsIcon />
          </ViewButton>
          <ViewButton aria-label="Large icons view">
            <ThumbnailIcon />
          </ViewButton>
        </ViewButtons>
      </StatusBar>
      <TaskbarRow />
    </Desktop>
  );
};

export default App;
